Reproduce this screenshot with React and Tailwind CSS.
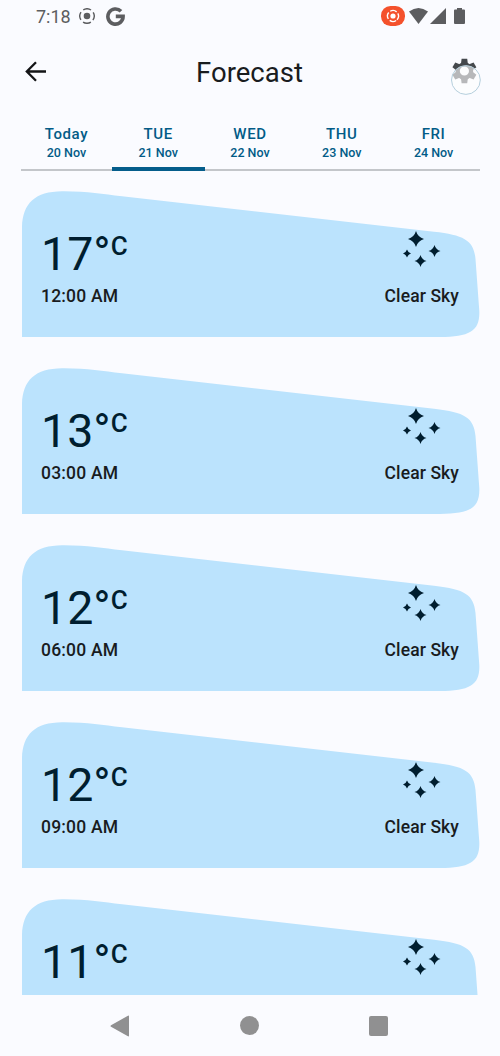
const days = [
  ["Today", "20 Nov"],
  ["TUE", "21 Nov"],
  ["WED", "22 Nov"],
  ["THU", "23 Nov"],
  ["FRI", "24 Nov"],
];

const hours = [
  { id: 0, temp: 17, time: "12:00 AM", sky: "Clear Sky" },
  { id: 1, temp: 13, time: "03:00 AM", sky: "Clear Sky" },
  { id: 2, temp: 12, time: "06:00 AM", sky: "Clear Sky" },
  { id: 3, temp: 12, time: "09:00 AM", sky: "Clear Sky" },
  { id: 4, temp: 11 },
];

function StatusBar() {
  return (
    <header className="flex h-8 shrink-0 items-center pl-9 pr-[35px] text-[#5c5d60]">
      <span className="w-[43px] pt-px text-[18px] leading-8">7:18</span>
      <svg className="h-4 w-4" viewBox="0 0 16 16" fill="none">
        <circle cx="8" cy="8" r="3.3" fill="currentColor" />
        <circle cx="8" cy="8" r="7.2" stroke="currentColor" strokeWidth="1.4" strokeDasharray="8.1 3.21" strokeDashoffset="-1.6" transform="rotate(45 8 8)" />
      </svg>
      <svg className="ml-[11px] h-[19px] w-[19px]" viewBox="0 0 19 19" fill="none" stroke="currentColor" strokeWidth="3.6">
        <path d="M15 4.3A7.6 7.6 0 1 0 17.1 9.4H9.8" />
      </svg>
      <div className="grow" />
      <svg className="h-5 w-6" viewBox="0 0 24 20" fill="none">
        <rect width="24" height="20" rx="9.5" fill="#f4512c" />
        <circle cx="12" cy="10" r="2.6" fill="#fff" />
        <circle cx="12" cy="10" r="5.5" stroke="#fff" strokeWidth="1.4" strokeDasharray="6.6 2.04" strokeDashoffset="-1" transform="rotate(45 12 10)" />
      </svg>
      <svg className="ml-[4px] h-4 w-[19px]" viewBox="0 0 19 16" fill="currentColor">
        <path d="M0 3.5Q9.5 -3.5 19 3.5L9.5 16Z" />
      </svg>
      <svg className="ml-[2px] h-4 w-4" viewBox="0 0 16 16" fill="currentColor">
        <path d="M16 0V16H0Z" />
      </svg>
      <svg className="ml-[8px] h-4 w-[11px]" viewBox="0 0 11 16" fill="currentColor">
        <path d="M3 0H8V1.5H10Q11 1.5 11 2.5V15Q11 16 10 16H1Q0 16 0 15V2.5Q0 1.5 1 1.5H3Z" />
      </svg>
    </header>
  );
}

function Gear() {
  return (
    <svg className="h-12 w-9" viewBox="0 0 36 48">
      <g transform="translate(16.4 23)" fill="#44484c">
        <path
          fillRule="evenodd"
          d="M0 -8.8A8.8 8.8 0 0 1 0 8.8A8.8 8.8 0 0 1 0 -8.8ZM0 -4.6A4.6 4.6 0 0 0 0 4.6A4.6 4.6 0 0 0 0 -4.6Z"
        />
        <path d="M-2.8 -12.2H2.8L3.4 -7.5H-3.4Z" />
        <path d="M-2.8 -12.2H2.8L3.4 -7.5H-3.4Z" transform="rotate(60)" />
        <path d="M-2.8 -12.2H2.8L3.4 -7.5H-3.4Z" transform="rotate(120)" />
        <path d="M-2.8 -12.2H2.8L3.4 -7.5H-3.4Z" transform="rotate(180)" />
        <path d="M-2.8 -12.2H2.8L3.4 -7.5H-3.4Z" transform="rotate(240)" />
        <path d="M-2.8 -12.2H2.8L3.4 -7.5H-3.4Z" transform="rotate(300)" />
      </g>
      <circle cx="17.9" cy="32" r="14.4" fill="#fdfdfe" fillOpacity="0.62" stroke="#b5cfdd" strokeWidth="1" />
    </svg>
  );
}

function Stars() {
  return (
    <svg className="h-[38px] w-[38px]" viewBox="0 0 38 38" fill="#001e2f">
      <path d="M13 0Q14.8 6.2 21 8Q14.8 9.8 13 16Q11.2 9.8 5 8Q11.2 6.2 13 0Z" />
      <path d="M31.5 14Q32.8 18.7 37.5 20Q32.8 21.3 31.5 26Q30.2 21.3 25.5 20Q30.2 18.7 31.5 14Z" />
      <path d="M4 18.5Q5 21.5 8 22.5Q5 23.5 4 26.5Q3 23.5 0 22.5Q3 21.5 4 18.5Z" />
      <path d="M17.5 24Q18.8 28.7 23.5 30Q18.8 31.3 17.5 36Q16.2 31.3 11.5 30Q16.2 28.7 17.5 24Z" />
    </svg>
  );
}

function ForecastCard({ temp, time, sky }) {
  return (
    <article className="relative h-[146px] w-[458px] shrink-0">
      <svg className="absolute inset-0 h-full w-full" viewBox="0 0 458 146" fill="#bbe3fd">
        <path d="M0 146V42C-1 14 11 0.5 40 0.2C65 0 80 3 100 5.3L412 40.7C443 44 452 50 453.5 68L457.3 120C458 140 448 145.5 418 146Z" />
      </svg>
      <div className="relative flex justify-between pl-[19px] pr-[21px] text-[#001e2f]">
        <div className="pt-[35px]">
          <div className="flex h-[58px] items-start">
            <span className="text-[46.5px] leading-[56px]">{temp}</span>
            <span className="text-[46.5px] leading-[56px]">°</span>
            <span className="pt-[3px] text-[26px] font-medium leading-[34px]">C</span>
          </div>
          {time && <div className="text-[17.5px] font-medium leading-6 tracking-[0.2px] text-[#191c1e]">{time}</div>}
        </div>
        <div className="flex flex-col items-end pt-[40px]">
          <div className="pr-[18px]">
            <Stars />
          </div>
          {sky && <div className="mt-[15px] text-[17.5px] font-medium leading-6 tracking-[0.1px] text-[#191c1e]">{sky}</div>}
        </div>
      </div>
    </article>
  );
}

export default function App() {
  return (
    <div className="flex h-[1056px] w-[500px] flex-col overflow-hidden bg-[#fafbff] font-['Roboto',sans-serif]">
      <StatusBar />
      <div className="flex h-[80px] shrink-0 items-center justify-between pl-[25px] pr-4">
        <svg className="h-[22px] w-[22px]" viewBox="0 0 22 22" fill="none" stroke="#131416" strokeWidth="2.3">
          <path d="M21 10.5H2.5M11 1.2L1.8 10.5L11 19.8" />
        </svg>
        <h1 className="pl-[4px] pt-[2px] text-[27.5px] leading-9 text-[#191c1e]">Forecast</h1>
        <Gear />
      </div>
      <nav className="ml-[21px] mr-5 grid h-[59px] shrink-0 grid-cols-5 text-[#025b87]">
        {days.map(([day, date], i) => (
          <div
            key={day}
            className={
              "flex flex-col items-center pt-[13px] font-medium " +
              (i === 1 ? "-ml-px border-b-4 border-[#045d8b]" : "border-b-2 border-[#c3c6ca] pr-px")
            }
          >
            <span className="text-[15px] leading-[19px] tracking-[0.6px]">{day}</span>
            <span className="text-[12.5px] leading-[18px]">{date}</span>
          </div>
        ))}
      </nav>
      <main className="flex h-[824px] shrink-0 flex-col gap-[31px] overflow-hidden pl-[22px] pt-[20px]">
        {hours.map(({ id, ...hour }) => (
          <ForecastCard key={id} {...hour} />
        ))}
      </main>
      <footer className="flex h-[61px] shrink-0 items-center justify-between pl-[110px] pr-[112px] text-[#909091]">
        <svg className="h-[22px] w-[19px]" viewBox="0 0 19 22" fill="currentColor">
          <path d="M19 1.5V20.5Q19 22 17.5 21L1 11.8Q0 11 1 10.2L17.5 1Q19 0 19 1.5Z" />
        </svg>
        <div className="h-[19px] w-[19px] rounded-full bg-[#909091]" />
        <div className="h-[20px] w-[19px] rounded-[2px] bg-[#909091]" />
      </footer>
    </div>
  );
}
